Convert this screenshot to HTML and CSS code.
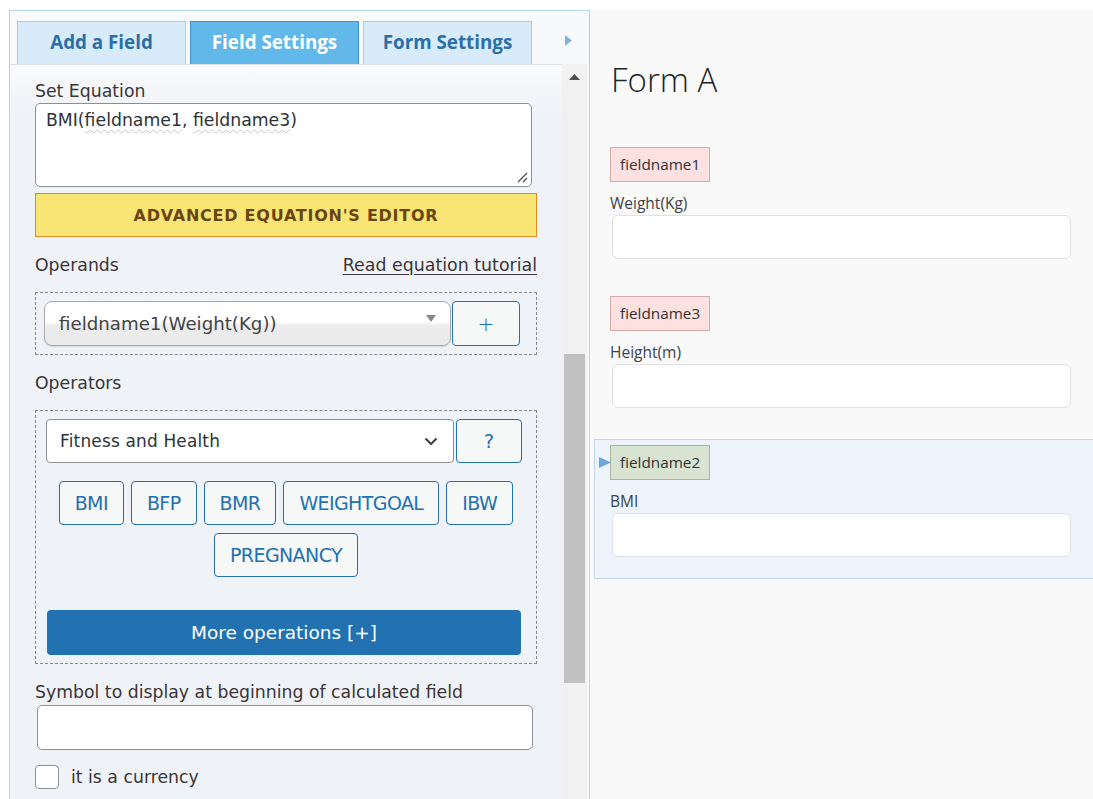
FILE: index.html
```html
<!DOCTYPE html>
<html>
<head>
<meta charset="utf-8">
<title>Form builder</title>
<link rel="stylesheet" href="styles.css">
</head>
<body>
<div class="page">
  <div class="left">
    <div class="tabs">
      <div class="tab">Add a Field</div>
      <div class="tab active">Field Settings</div>
      <div class="tab">Form Settings</div>
      <svg class="tab-arrow" width="7" height="11" viewBox="0 0 7 11"><path d="M0 0 L7 5.5 L0 11 Z" fill="#7fb3df"/></svg>
    </div>
    <div class="pane">
      <div class="content">
        <div class="label first">Set Equation</div>
        <div class="textarea">BMI(<span class="sq">fieldname1</span>, <span class="sq">fieldname3</span>)<svg class="grip" width="12" height="12" viewBox="0 0 12 12"><path d="M11 2 L2 11 M11 7 L7 11" stroke="#555" stroke-width="1.4"/></svg></div>
        <div class="adv">ADVANCED EQUATION'S EDITOR</div>
        <div class="row-between">
          <span class="label">Operands</span>
          <a class="link">Read equation tutorial</a>
        </div>
        <div class="dashed operands">
          <div class="fancy-select">fieldname1(Weight(Kg))<svg class="tri" width="10" height="7" viewBox="0 0 10 7"><path d="M0 0 L10 0 L5 7 Z" fill="#888"/></svg></div>
          <div class="btn-outline plus">+</div>
        </div>
        <div class="label op-label">Operators</div>
        <div class="dashed operators">
          <div class="op-top">
            <div class="select">Fitness and Health<svg class="chev" width="14" height="9" viewBox="0 0 14 9"><path d="M1.5 1.5 L7 7 L12.5 1.5" fill="none" stroke="#444" stroke-width="2.2"/></svg></div>
            <div class="btn-outline q">?</div>
          </div>
          <div class="op-buttons">
            <div class="btn-outline op">BMI</div>
            <div class="btn-outline op">BFP</div>
            <div class="btn-outline op">BMR</div>
            <div class="btn-outline op">WEIGHTGOAL</div>
            <div class="btn-outline op">IBW</div>
            <div class="btn-outline op">PREGNANCY</div>
          </div>
          <div class="more">More operations [+]</div>
        </div>
        <div class="label sym-label">Symbol to display at beginning of calculated field</div>
        <div class="input"></div>
        <div class="check"><span class="box"></span><span>it is a currency</span></div>
      </div>
      <div class="scrollbar">
        <svg class="sb-up" width="11" height="6" viewBox="0 0 11 6"><path d="M0 6 L5.5 0 L11 6 Z" fill="#505050"/></svg>
        <div class="sb-thumb"></div>
      </div>
    </div>
  </div>
  <div class="right">
    <h1 class="form-title">Form A</h1>
    <div class="field">
      <div class="tag red">fieldname1</div>
      <div class="f-label">Weight(Kg)</div>
      <div class="f-input"></div>
    </div>
    <div class="field">
      <div class="tag red">fieldname3</div>
      <div class="f-label">Height(m)</div>
      <div class="f-input"></div>
    </div>
    <div class="field selected">
      <svg class="sel-arrow" width="12" height="11" viewBox="0 0 12 11"><path d="M0 0 L12 5.5 L0 11 Z" fill="#6ba7d8"/></svg>
      <div class="tag green">fieldname2</div>
      <div class="f-label">BMI</div>
      <div class="f-input"></div>
    </div>
  </div>
</div>
</body>
</html>
```
FILE: styles.css
```css
* { box-sizing: border-box; }
html, body { margin: 0; padding: 0; }
body {
  background: #ffffff;
  width: 1093px;
  height: 799px;
  overflow: hidden;
  font-family: "DejaVu Sans", sans-serif;
}
.page {
  display: flex;
  align-items: flex-start;
  height: 799px;
}
.left {
  margin: 10px 0 0 9px;
  width: 581px;
  height: 789px;
  border: 1px solid #b4d5ee;
  border-bottom: none;
  background: #f8f9fb;
  display: flex;
  flex-direction: column;
}
.tabs {
  display: flex;
  align-items: flex-end;
  padding: 10px 0 0 7px;
  gap: 4px;
  height: 53px;
  flex: none;
}
.tab {
  width: 169px;
  height: 43px;
  border: 1px solid #a9cfee;
  border-bottom: none;
  background: #d8ebfa;
  color: #2a6fa8;
  font-family: "Open Sans", "Noto Sans", sans-serif;
  font-weight: bold;
  font-size: 18.8px;
  display: flex;
  align-items: center;
  justify-content: center;
  padding-bottom: 2px;
}
.tab.active {
  background: #62b8e8;
  border-color: #3a94d8;
  color: #ffffff;
}
.tab-arrow {
  align-self: flex-start;
  margin: 14px 0 0 29px;
}
.pane {
  flex: 1;
  display: flex;
  min-height: 0;
}
.content {
  width: 552px;
  padding: 15px 0 0 25px;
  border-top: 1px solid #dde1e6;
  background: linear-gradient(#f9fafc, #eff3f7 50px);
  color: #3c3438;
  font-size: 17.3px;
}
.label {
  line-height: 22px;
  height: 22px;
  color: #3c3438;
  font-size: 17.3px;
}
.textarea {
  position: relative;
  margin-top: 1px;
  width: 497px;
  height: 84px;
  background: #ffffff;
  border: 1px solid #8c8f94;
  border-radius: 5px;
  padding: 5px 10px;
  font-size: 17.3px;
  line-height: 22px;
  color: #2c3338;
}
.sq {
  text-decoration: underline wavy #c8c8c8;
  text-decoration-thickness: 1px;
  text-underline-offset: 3px;
}
.grip {
  position: absolute;
  right: 3px;
  bottom: 3px;
}
.adv {
  margin-top: 6px;
  width: 502px;
  height: 44px;
  background: #f8e574;
  border: 1px solid #dc8b26;
  color: #6a4514;
  font-weight: bold;
  font-size: 16px;
  letter-spacing: 0.75px;
  display: flex;
  align-items: center;
  justify-content: center;
}
.row-between {
  margin-top: 17px;
  width: 502px;
  display: flex;
  justify-content: space-between;
  align-items: center;
  height: 22px;
}
.link {
  color: #3c3438;
  text-decoration: underline;
  text-underline-offset: 3px;
  font-size: 17.4px;
  line-height: 22px;
}
.dashed {
  width: 502px;
  border: 1px dashed #8a8a8a;
}
.operands {
  margin-top: 16px;
  height: 63px;
  padding: 8px 0 0 8px;
  display: flex;
  align-items: flex-start;
}
.fancy-select {
  width: 407px;
  height: 45px;
  border: 1px solid #aaaaaa;
  border-radius: 8px;
  background: linear-gradient(#ffffff 0%, #ffffff 45%, #ececec 55%, #eaeaea 100%);
  box-shadow: 0 1px 1px rgba(0,0,0,0.12);
  display: flex;
  align-items: center;
  padding-left: 14px;
  font-size: 18.2px;
  color: #444444;
}
.tri {
  margin-left: auto;
  margin-right: 14px;
  margin-top: -10px;
}
.btn-outline {
  border: 1px solid #2271b1;
  border-radius: 4px;
  background: #f6f7f7;
  color: #2271b1;
  display: flex;
  align-items: center;
  justify-content: center;
}
.plus {
  margin-left: 1px;
  width: 68px;
  height: 45px;
  font-size: 20px;
  font-weight: 300;
}
.op-label {
  margin-top: 17px;
}
.operators {
  margin-top: 16px;
  height: 254px;
  padding: 8px 0 0 10px;
}
.op-top {
  display: flex;
  gap: 2px;
}
.select {
  width: 408px;
  height: 44px;
  background: #ffffff;
  border: 1px solid #8c8f94;
  border-radius: 4px;
  display: flex;
  align-items: center;
  padding-left: 13px;
  font-size: 16.9px;
  color: #2c3338;
  letter-spacing: 0.2px;
}
.chev {
  margin-left: auto;
  margin-right: 15px;
}
.q {
  width: 66px;
  height: 44px;
  font-size: 19px;
}
.op-buttons {
  margin-top: 18px;
  width: 480px;
  display: flex;
  flex-wrap: wrap;
  justify-content: center;
  gap: 8px 7px;
}
.op {
  height: 44px;
  padding: 0 15px;
  font-size: 19px;
  letter-spacing: -0.6px;
}
.more {
  margin: 33px 0 0 1px;
  width: 474px;
  height: 45px;
  background: #2271b1;
  border-radius: 4px;
  color: #ffffff;
  font-size: 18.5px;
  display: flex;
  align-items: center;
  justify-content: center;
}
.sym-label {
  margin-top: 17px;
}
.input {
  margin: 2px 0 0 2px;
  width: 496px;
  height: 45px;
  background: #ffffff;
  border: 1px solid #8c8f94;
  border-radius: 5px;
}
.check {
  margin-top: 15px;
  display: flex;
  align-items: center;
  gap: 12px;
  font-size: 17.3px;
  color: #3c3438;
}
.box {
  width: 24px;
  height: 24px;
  border: 1px solid #8c8f94;
  border-radius: 4px;
  background: #ffffff;
}
.scrollbar {
  width: 25px;
  background: #f1f1f1;
  display: flex;
  flex-direction: column;
  align-items: center;
}
.sb-up {
  margin-top: 10px;
}
.sb-thumb {
  margin-top: 274px;
  width: 21px;
  height: 329px;
  background: #c1c1c1;
}
.right {
  margin-top: 10px;
  flex: 1;
  height: 789px;
  background: #f9f9f9;
  overflow: hidden;
  font-family: "Open Sans", "Noto Sans", sans-serif;
}
.form-title {
  margin: 50px 0 0 21px;
  font-size: 33px;
  font-weight: 300;
  line-height: 40px;
  color: #1d2327;
}
.field {
  position: relative;
  margin: 0 -2px 9px 4px;
  padding: 5px 0 21px 15px;
  border: 1px solid transparent;
}
.form-title + .field {
  margin-top: 41px;
}
.field.selected {
  background: #edf4fc;
  border-color: #c3d6ee;
}
.sel-arrow {
  position: absolute;
  left: 4px;
  top: 17px;
}
.tag {
  display: inline-block;
  height: 35px;
  line-height: 33px;
  padding: 0 9px;
  font-size: 15.3px;
  color: #333333;
  border: 1px solid;
}
.tag.red {
  background: #fde0e0;
  border-color: #d6a9a9;
}
.tag.green {
  background: #d9e3d1;
  border-color: #a8b69f;
}
.f-label {
  margin-top: 10px;
  line-height: 22px;
  height: 22px;
  font-size: 15.5px;
  color: #3c434a;
}
.f-input {
  margin: 1px 0 0 2px;
  width: 459px;
  height: 44px;
  background: #ffffff;
  border: 1px solid #e0e0e0;
  border-radius: 6px;
}
```
